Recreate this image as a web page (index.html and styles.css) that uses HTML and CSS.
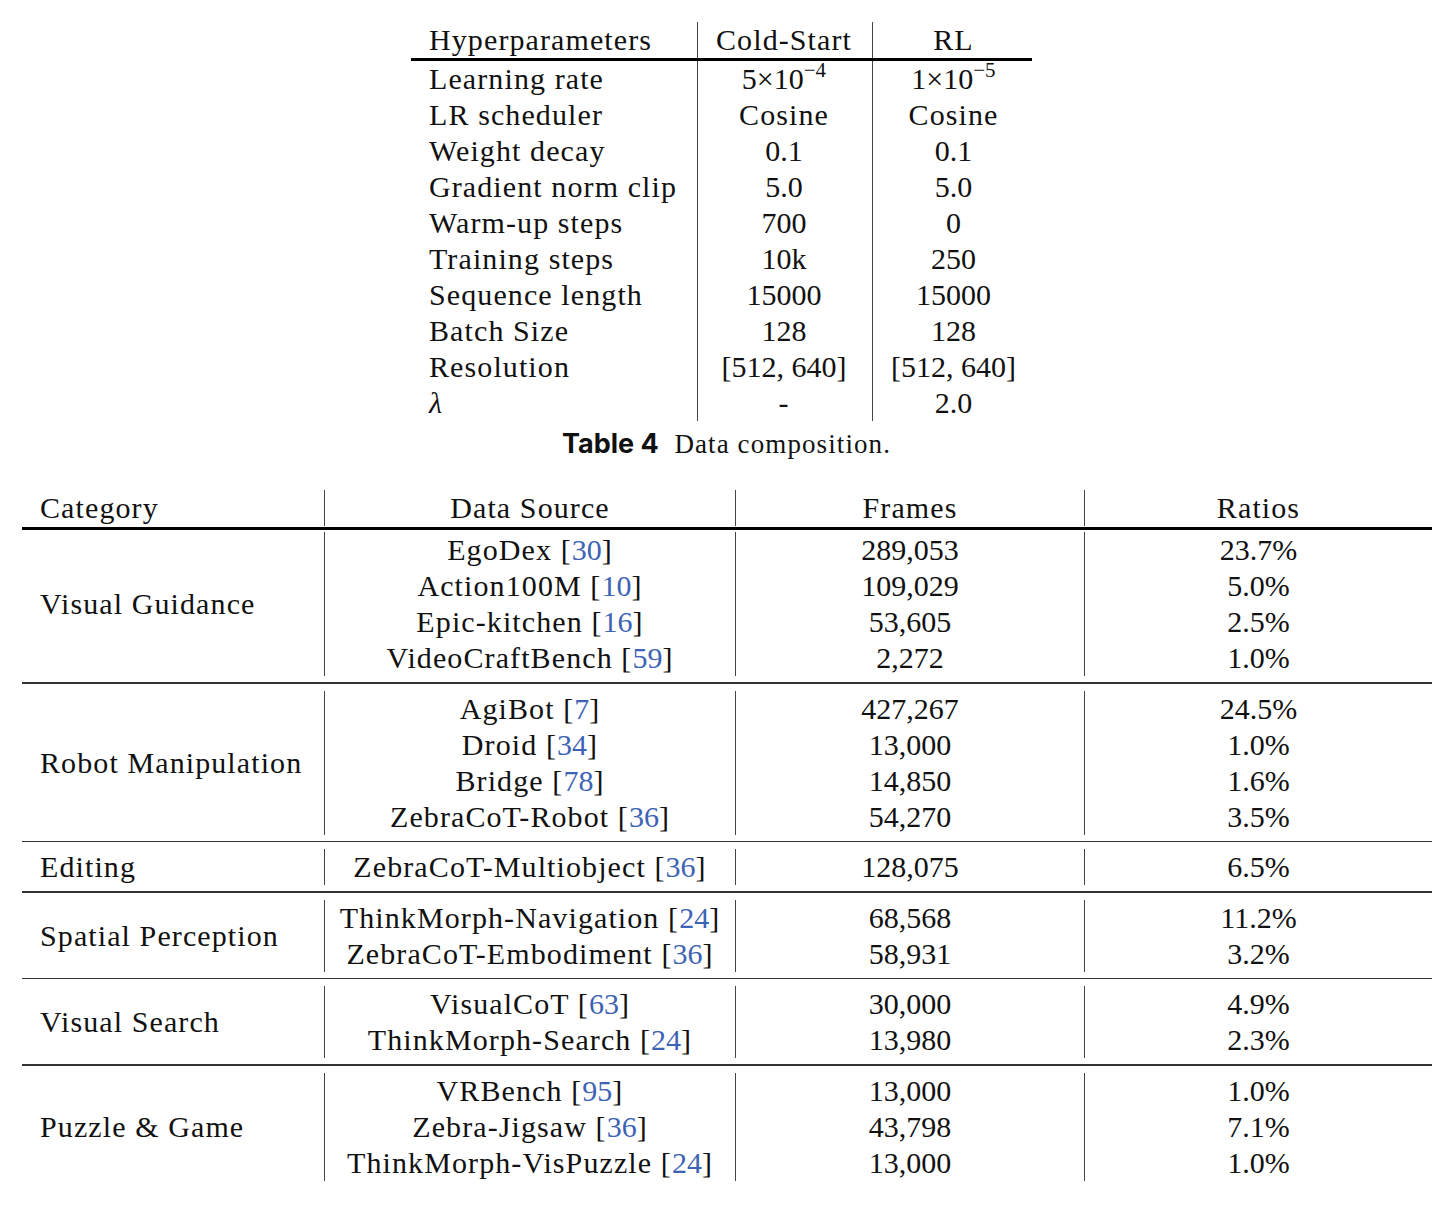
FILE: index.html
```html
<!DOCTYPE html>
<html lang="en">
<head>
    <meta charset="UTF-8">
    <title>Data composition</title>
    <link rel="stylesheet" href="styles.css">
</head>
<body>
<div class="page">
    <!--超参数表-->
    <div class="hyper">
        <div class="hrow">
            <div class="c1">Hyperparameters</div>
            <div class="c2">Cold-Start</div>
            <div class="c3">RL</div>
        </div>
        <div class="rule-thick"></div>
        <div class="hbody">
            <div class="hrow"><div class="c1">Learning rate</div><div class="c2 num">5×10<sup>−4</sup></div><div class="c3 num">1×10<sup>−5</sup></div></div>
            <div class="hrow"><div class="c1">LR scheduler</div><div class="c2">Cosine</div><div class="c3">Cosine</div></div>
            <div class="hrow"><div class="c1">Weight decay</div><div class="c2 num">0.1</div><div class="c3 num">0.1</div></div>
            <div class="hrow"><div class="c1">Gradient norm clip</div><div class="c2 num">5.0</div><div class="c3 num">5.0</div></div>
            <div class="hrow"><div class="c1">Warm-up steps</div><div class="c2 num">700</div><div class="c3 num">0</div></div>
            <div class="hrow"><div class="c1">Training steps</div><div class="c2 num">10k</div><div class="c3 num">250</div></div>
            <div class="hrow"><div class="c1">Sequence length</div><div class="c2 num">15000</div><div class="c3 num">15000</div></div>
            <div class="hrow"><div class="c1">Batch Size</div><div class="c2 num">128</div><div class="c3 num">128</div></div>
            <div class="hrow"><div class="c1">Resolution</div><div class="c2 num">[512, 640]</div><div class="c3 num">[512, 640]</div></div>
            <div class="hrow"><div class="c1"><i>λ</i></div><div class="c2">-</div><div class="c3 num">2.0</div></div>
        </div>
    </div>

    <p class="caption"><b>Table 4</b>&nbsp; Data composition.</p>

    <!--数据组成表-->
    <div class="data">
        <div class="group head">
            <div class="cat">Category</div>
            <div class="col src"><div>Data Source</div></div>
            <div class="col frm"><div>Frames</div></div>
            <div class="col rat"><div>Ratios</div></div>
        </div>
        <div class="rule-thick"></div>

        <div class="group">
            <div class="cat">Visual Guidance</div>
            <div class="col src">
                <div>EgoDex [<a>30</a>]</div>
                <div>Action100M [<a>10</a>]</div>
                <div>Epic-kitchen [<a>16</a>]</div>
                <div>VideoCraftBench [<a>59</a>]</div>
            </div>
            <div class="col frm num">
                <div>289,053</div><div>109,029</div><div>53,605</div><div>2,272</div>
            </div>
            <div class="col rat num">
                <div>23.7%</div><div>5.0%</div><div>2.5%</div><div>1.0%</div>
            </div>
        </div>
        <div class="rule"></div>

        <div class="group">
            <div class="cat">Robot Manipulation</div>
            <div class="col src">
                <div>AgiBot [<a>7</a>]</div>
                <div>Droid [<a>34</a>]</div>
                <div>Bridge [<a>78</a>]</div>
                <div>ZebraCoT-Robot [<a>36</a>]</div>
            </div>
            <div class="col frm num">
                <div>427,267</div><div>13,000</div><div>14,850</div><div>54,270</div>
            </div>
            <div class="col rat num">
                <div>24.5%</div><div>1.0%</div><div>1.6%</div><div>3.5%</div>
            </div>
        </div>
        <div class="rule"></div>

        <div class="group">
            <div class="cat">Editing</div>
            <div class="col src">
                <div>ZebraCoT-Multiobject [<a>36</a>]</div>
            </div>
            <div class="col frm num"><div>128,075</div></div>
            <div class="col rat num"><div>6.5%</div></div>
        </div>
        <div class="rule"></div>

        <div class="group">
            <div class="cat">Spatial Perception</div>
            <div class="col src">
                <div>ThinkMorph-Navigation [<a>24</a>]</div>
                <div>ZebraCoT-Embodiment [<a>36</a>]</div>
            </div>
            <div class="col frm num"><div>68,568</div><div>58,931</div></div>
            <div class="col rat num"><div>11.2%</div><div>3.2%</div></div>
        </div>
        <div class="rule"></div>

        <div class="group">
            <div class="cat">Visual Search</div>
            <div class="col src">
                <div>VisualCoT [<a>63</a>]</div>
                <div>ThinkMorph-Search [<a>24</a>]</div>
            </div>
            <div class="col frm num"><div>30,000</div><div>13,980</div></div>
            <div class="col rat num"><div>4.9%</div><div>2.3%</div></div>
        </div>
        <div class="rule"></div>

        <div class="group">
            <div class="cat">Puzzle &amp; Game</div>
            <div class="col src">
                <div>VRBench [<a>95</a>]</div>
                <div>Zebra-Jigsaw [<a>36</a>]</div>
                <div>ThinkMorph-VisPuzzle [<a>24</a>]</div>
            </div>
            <div class="col frm num"><div>13,000</div><div>43,798</div><div>13,000</div></div>
            <div class="col rat num"><div>1.0%</div><div>7.1%</div><div>1.0%</div></div>
        </div>
    </div>
</div>
</body>
</html>
```

FILE: styles.css
```css
*{
    margin: 0;
    padding: 0;
    box-sizing: border-box;
}
body{
    background-color: #fff;
    color: #111;
    font-family: "Liberation Serif", "Times New Roman", serif;
    font-size: 30px;
    line-height: 36px;
}
.page{
    width: 1453px;
    padding-top: 22px;
}
.num{
    letter-spacing: 0;
}

/*超参数表*/
.hyper{
    width: 621px;
    margin-left: 411px;
    letter-spacing: 1.1px;
}
.hrow{
    display: grid;
    grid-template-columns: 286px 175px 160px;
    height: 36px;
}
.hrow .c1{
    padding-left: 18px;
}
.hrow .c2,
.hrow .c3{
    text-align: center;
    border-left: 1px solid #444;
}
.hrow .c2{
    padding-right: 2px;
}
.hrow .c3{
    padding-left: 2px;
}
.hrow sup{
    font-size: 21px;
    line-height: 0;
    vertical-align: 12px;
    letter-spacing: 0;
}
.hyper .rule-thick{
    height: 3px;
    background-color: #000;
}

/*标题*/
.caption{
    margin-top: 5px;
    margin-bottom: 28px;
    text-align: center;
    font-size: 27px;
    letter-spacing: 1.1px;
}
.caption b{
    font-family: Inter, "Liberation Sans", sans-serif;
    font-weight: 700;
    font-size: 27px;
    letter-spacing: 0;
}

/*数据组成表*/
.data{
    width: 1410px;
    margin-left: 22px;
    letter-spacing: 1.1px;
}
.group{
    display: flex;
}
.cat{
    width: 302px;
    padding-left: 18px;
    display: flex;
    align-items: center;
}
.col{
    border-left: 1px solid #444;
    text-align: center;
}
.col div{
    height: 36px;
}
.col.src{
    width: 411px;
}
.col.frm{
    width: 349px;
}
.col.rat{
    width: 348px;
}
.data .rule-thick{
    height: 3px;
    margin-top: 1px;
    margin-bottom: 2px;
    background-color: #000;
}
.rule{
    height: 1.5px;
    margin: 6px 0 7px;
    background-color: #333;
}
.col a{
    color: #3d63b5;
    letter-spacing: 0;
}
```
